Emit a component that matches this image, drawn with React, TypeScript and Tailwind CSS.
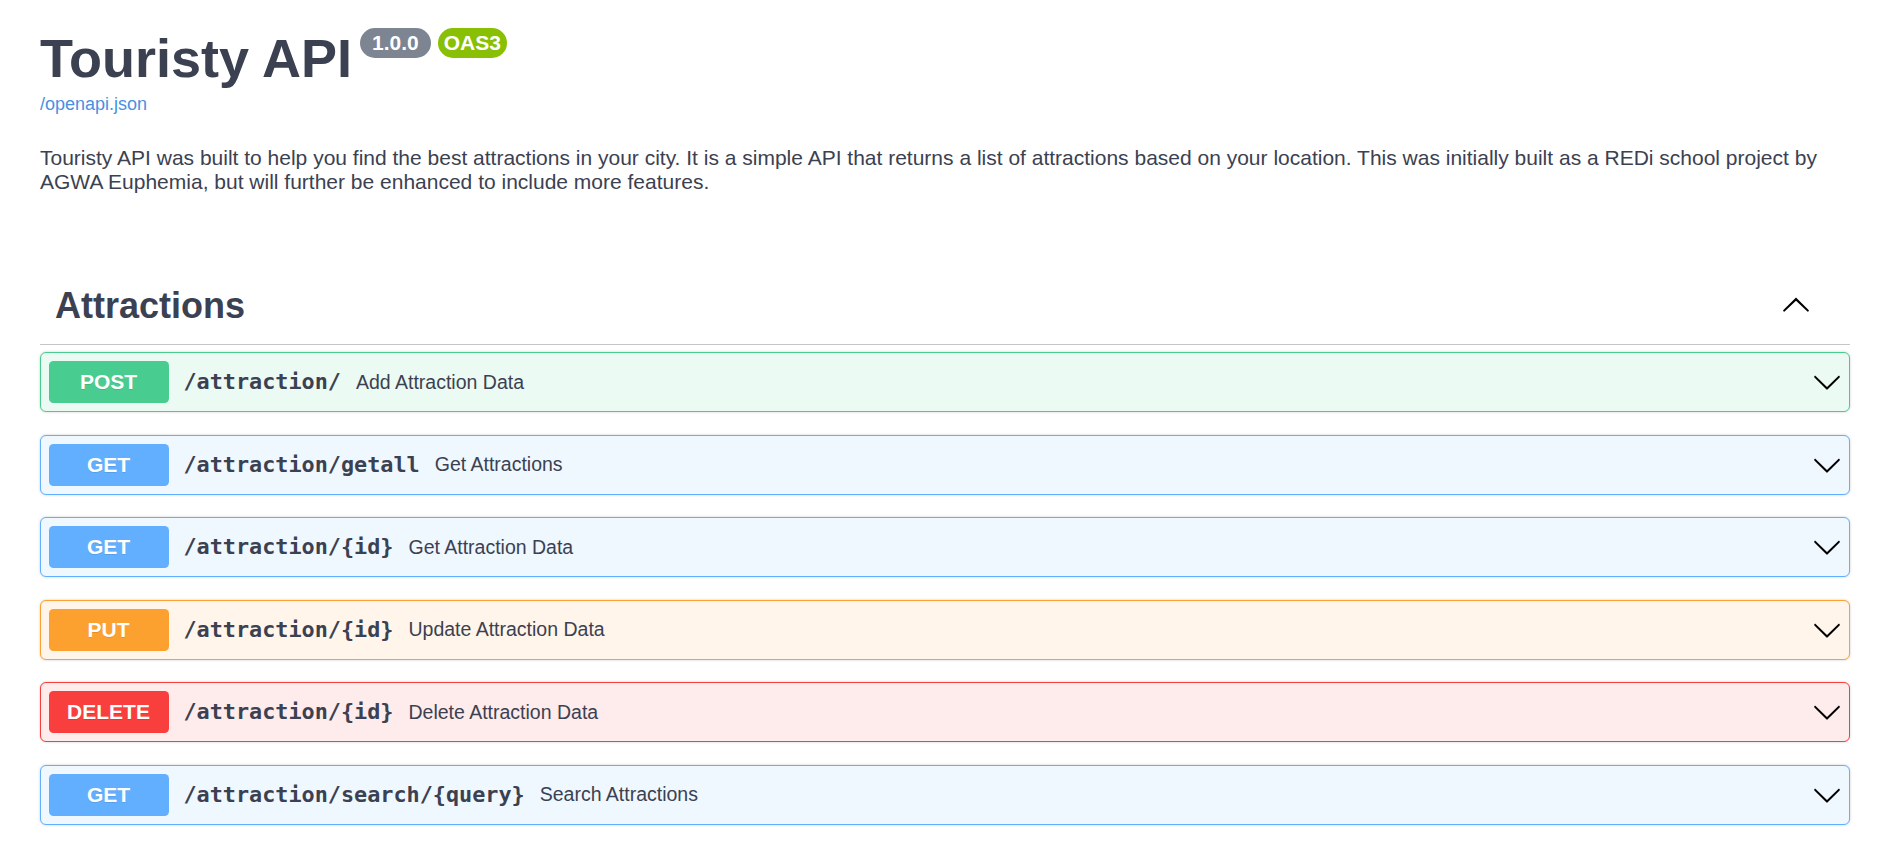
import React from 'react';

type Method = 'POST' | 'GET' | 'PUT' | 'DELETE';

interface Operation {
  method: Method;
  path: string;
  summary: string;
}

const OPERATIONS: Operation[] = [
  { method: 'POST', path: '/attraction/', summary: 'Add Attraction Data' },
  { method: 'GET', path: '/attraction/getall', summary: 'Get Attractions' },
  { method: 'GET', path: '/attraction/{id}', summary: 'Get Attraction Data' },
  { method: 'PUT', path: '/attraction/{id}', summary: 'Update Attraction Data' },
  { method: 'DELETE', path: '/attraction/{id}', summary: 'Delete Attraction Data' },
  { method: 'GET', path: '/attraction/search/{query}', summary: 'Search Attractions' },
];

// swagger colours per verb
const BLOCK_STYLES: Record<Method, { block: string; badge: string }> = {
  POST: { block: 'border-[#49cc90] bg-[#ecfaf4]', badge: 'bg-[#49cc90]' },
  GET: { block: 'border-[#61affe] bg-[#eff7ff]', badge: 'bg-[#61affe]' },
  PUT: { block: 'border-[#fca130] bg-[#fff5ea]', badge: 'bg-[#fca130]' },
  DELETE: { block: 'border-[#f93e3e] bg-[#feebeb]', badge: 'bg-[#f93e3e]' },
};

const ArrowDown: React.FC = () => (
  <svg className="h-[30px] w-[30px] shrink-0" viewBox="0 0 20 20" fill="#000">
    <path d="M17.418 6.109c.272-.268.709-.268.979 0s.271.701 0 .969l-7.908 7.83c-.27.268-.707.268-.979 0l-7.908-7.83c-.27-.268-.27-.701 0-.969.271-.268.709-.268.979 0L10 13.25l7.418-7.141z" />
  </svg>
);

const ArrowUp: React.FC = () => (
  <svg className="h-[30px] w-[30px] shrink-0" viewBox="0 0 20 20" fill="#000">
    <path d="M17.418 14.908c.272.268.709.268.979 0s.271-.701 0-.969l-7.908-7.83c-.27-.268-.707-.268-.979 0l-7.908 7.83c-.27.268-.27.701 0 .969.271.268.709.268.979 0L10 7.767l7.418 7.141z" />
  </svg>
);

const OperationRow: React.FC<{ op: Operation }> = ({ op }) => {
  const s = BLOCK_STYLES[op.method];
  return (
    <div
      className={`flex h-[60px] items-center rounded-[6px] border px-[7.5px] shadow-[0_0_3px_rgba(0,0,0,0.19)] ${s.block}`}
    >
      <span
        className={`h-[42px] w-[120px] shrink-0 rounded-[4.5px] text-center text-[21px] font-bold leading-[42px] text-white [text-shadow:0_1px_0_rgba(0,0,0,0.1)] ${s.badge}`}
      >
        {op.method}
      </span>
      <span className="px-[15px] font-['DejaVu_Sans_Mono',monospace] text-[21.8px] font-bold text-[#3b4151]">
        {op.path}
      </span>
      <span className="flex-1 text-[19.5px] text-[#3b4151]">{op.summary}</span>
      <ArrowDown />
    </div>
  );
};

export default function App() {
  return (
    <div className="min-h-screen bg-white font-['Liberation_Sans',Arial,sans-serif] text-[#3b4151]">
      <div className="ml-[40px] mr-[37px]">
        {/* info */}
        <section className="pt-[28px]">
          <div className="flex items-start">
            <h2 className="m-0 text-[54px] font-bold leading-[60px] text-[#3b4151]">Touristy API</h2>
            <span className="ml-[8px] rounded-full bg-[#7d8492] px-[12px] py-[3px] text-[21px] font-bold leading-[23.5px] text-white">
              1.0.0
            </span>
            <span className="ml-[7px] rounded-full bg-[#89bf04] px-[6px] py-[3px] text-[21px] font-bold leading-[23.5px] text-white">
              OAS3
            </span>
          </div>
          <a href="#" className="mt-[5.8px] block w-fit text-[18px] leading-[20px] text-[#4990e2]">
            /openapi.json
          </a>
          <p className="mt-[32.2px] text-[21px] leading-[24px] text-[#3b4151]">
            Touristy API was built to help you find the best attractions in your city. It is a simple API that returns a
            list of attractions based on your location. This was initially built as a REDi school project by AGWA
            Euphemia, but will further be enhanced to include more features.
          </p>
        </section>

        {/* tag section */}
        <section className="mt-[76px]">
          <div className="flex items-center border-b border-[#c4c6cb] pb-[17.5px] pl-[15px] pr-[30px] pt-[15px]">
            <h3 className="flex-1 text-[36px] font-bold leading-[42px] text-[#3b4151]">Attractions</h3>
            <span className="mb-[3px] mr-[9px]">
              <ArrowUp />
            </span>
          </div>
          <div className="mt-[7px] flex flex-col gap-[22.5px]">
            {OPERATIONS.map((op, i) => (
              <OperationRow key={i} op={op} />
            ))}
          </div>
        </section>
      </div>
    </div>
  );
}
